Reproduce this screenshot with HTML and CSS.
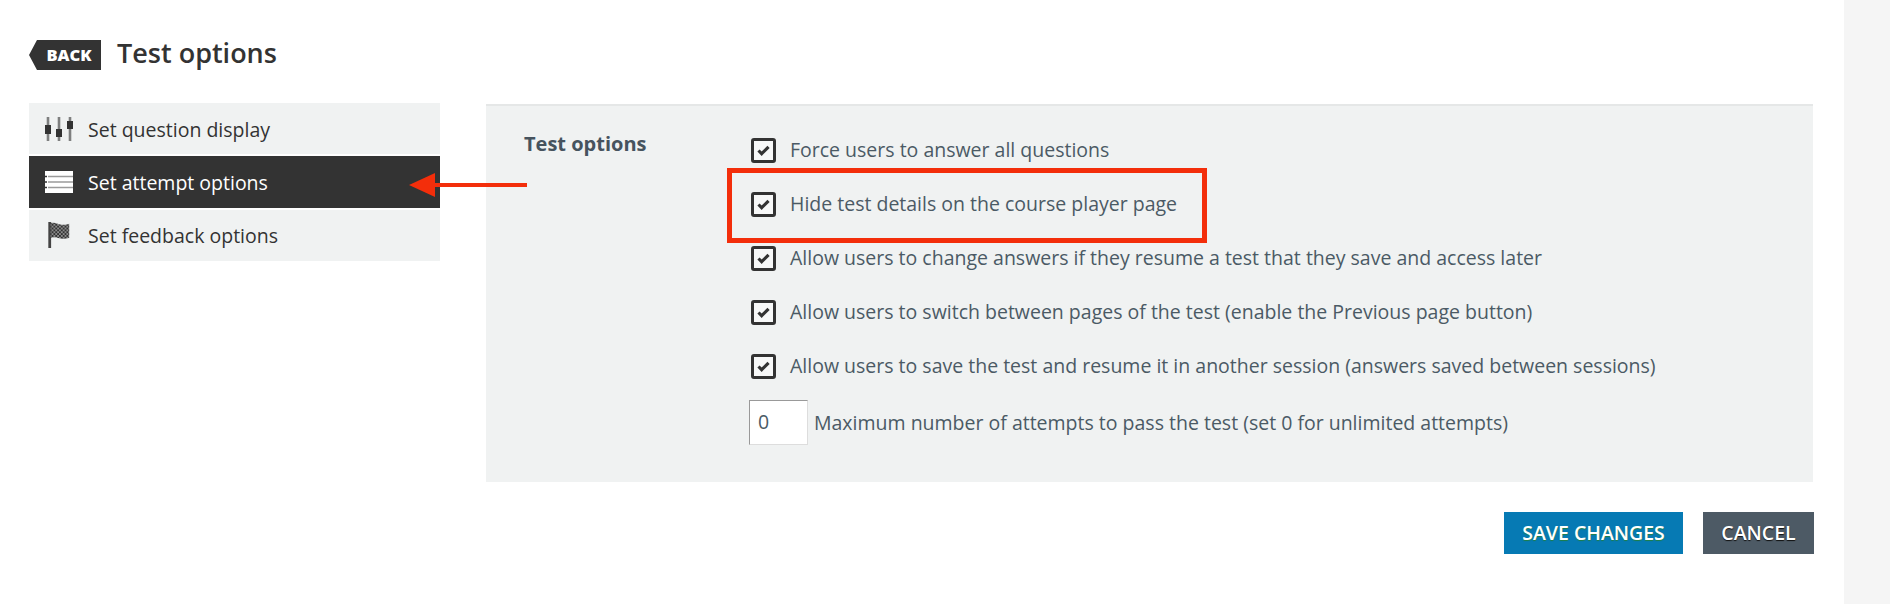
FILE: index.html
```html
<!DOCTYPE html>
<html lang="en">

<head>
    <meta charset="UTF-8">
    <meta name="viewport" content="width=device-width, initial-scale=1.0">
    <title>Test options</title>
    <link rel="stylesheet" href="styles.css">
</head>

<body>
    <div class="page">
        <main class="main">
            <header class="page-head">
                <a class="back" href="#">BACK</a>
                <h1>Test options</h1>
            </header>

            <div class="columns">
                <nav class="side-menu">
                    <a class="side-item" href="#">
                        <svg class="side-icon" viewBox="0 0 28 26">
                            <path d="M3 1v24M14 1v24M25 1v24" stroke="currentColor" stroke-width="2.6" opacity="0.6" />
                            <path d="M0 9h6v9H0zM11 13h6v8h-6zM22 5h6v8h-6z" fill="currentColor" />
                        </svg>
                        <span>Set question display</span>
                    </a>
                    <a class="side-item active" href="#">
                        <svg class="side-icon" viewBox="0 0 28 26">
                            <path d="M0 2h28v22H0z" fill="currentColor" />
                            <path d="M3 7.500h25M3 13h25M3 18.500h25" stroke="#9a9a9a" stroke-width="1.6" />
                            <path d="M0 7.500h2M0 13h2M0 18.500h2" stroke="#333" stroke-width="1.6" />
                        </svg>
                        <span>Set attempt options</span>
                    </a>
                    <a class="side-item" href="#">
                        <svg class="side-icon" viewBox="0 0 28 28">
                            <defs>
                                <pattern id="checker" width="4" height="4" patternUnits="userSpaceOnUse">
                                    <path d="M0 0h4v4H0z" fill="#8a8a8a" />
                                    <path d="M0 0h2v2H0zM2 2h2v2H2z" fill="#333" />
                                </pattern>
                            </defs>
                            <path d="M4 0v28" stroke="#444" stroke-width="3" />
                            <path d="M5 1c6-1 8 2 13 2 3 0 5 0 7-1v15c-2 1-4 1-7 1-5 0-7-3-13-1z" fill="url(#checker)" />
                        </svg>
                        <span>Set feedback options</span>
                    </a>
                </nav>

                <div class="content">
                    <section class="panel">
                        <h2 class="panel-title">Test options</h2>
                        <div class="options">
                            <label class="option"><span class="check"><svg viewBox="0 0 14 12"><path d="M1.500 6l3.500 3.500L12.500 2" /></svg></span>Force users to answer all questions</label>
                            <label class="option"><span class="check"><svg viewBox="0 0 14 12"><path d="M1.500 6l3.500 3.500L12.500 2" /></svg></span>Hide test details on the course player page</label>
                            <label class="option"><span class="check"><svg viewBox="0 0 14 12"><path d="M1.500 6l3.500 3.500L12.500 2" /></svg></span>Allow users to change answers if they resume a test that they save and access later</label>
                            <label class="option"><span class="check"><svg viewBox="0 0 14 12"><path d="M1.500 6l3.500 3.500L12.500 2" /></svg></span>Allow users to switch between pages of the test (enable the Previous page button)</label>
                            <label class="option"><span class="check"><svg viewBox="0 0 14 12"><path d="M1.500 6l3.500 3.500L12.500 2" /></svg></span>Allow users to save the test and resume it in another session (answers saved between sessions)</label>
                            <label class="attempts"><input class="attempts-input" type="text" value="0">Maximum number of attempts to pass the test (set 0 for unlimited attempts)</label>
                        </div>
                    </section>
                    <div class="actions">
                        <button class="btn btn-save">SAVE CHANGES</button>
                        <button class="btn btn-cancel">CANCEL</button>
                    </div>
                </div>
            </div>
        </main>
        <aside class="rail"></aside>
    </div>

    <!-- annotations drawn over the screenshot -->
    <div class="callout-box"></div>
    <svg class="callout-arrow" viewBox="0 0 118 26">
        <path d="M26 13h92" stroke="#f32e0b" stroke-width="4" />
        <path d="M0 13L26 1v24z" fill="#f32e0b" />
    </svg>
</body>

</html>
```

FILE: styles.css
```css
* {
    box-sizing: border-box;
}

html,
body {
    margin: 0;
    height: 100%;
    overflow: hidden;
}

body {
    font-family: "Open Sans", sans-serif;
    color: #333;
    background: #fff;
}

.page {
    display: flex;
    height: 604px;
}

.main {
    width: 1844px;
    padding: 40px 30px 0 29px;
}

.rail {
    flex: 1;
    background: #f5f5f5;
}

.page-head {
    display: flex;
    align-items: center;
    gap: 16px;
    height: 30px;
    margin-bottom: 33px;
}

.back {
    width: 72px;
    height: 30px;
    padding-left: 8px;
    background: #333;
    clip-path: polygon(8px 0, 100% 0, 100% 100%, 8px 100%, 0 50%);
    color: #fff;
    font-size: 16.5px;
    font-weight: 800;
    line-height: 30px;
    text-align: center;
    text-decoration: none;
}

h1 {
    margin: 0 0 6px;
    font-size: 27px;
    font-weight: 600;
    color: #333;
}

.columns {
    display: flex;
    gap: 46px;
}

.side-menu {
    display: flex;
    flex-direction: column;
    gap: 2px;
    width: 411px;
    height: 158px;
}

.side-item {
    display: flex;
    align-items: center;
    gap: 15px;
    height: 52px;
    padding-left: 16px;
    background: #f0f2f2;
    color: #333;
    font-size: 19.5px;
    text-decoration: none;
}

.side-item span {
    padding-top: 1px;
}

.side-item.active {
    background: #333;
    color: #fff;
}

.side-icon {
    flex: none;
    width: 28px;
    height: 26px;
}

.content {
    width: 1328px;
    margin-top: 1px;
}

.panel {
    display: flex;
    height: 378px;
    margin-right: 1px;
    padding: 32px 0 0 38px;
    background: #f0f2f2;
    border-top: 2px solid #e5e7e7;
}

.panel-title {
    width: 225px;
    margin: -7px 0 0;
    font-size: 20px;
    font-weight: 700;
    line-height: 26px;
    color: #46535e;
}

.options {
    display: flex;
    flex-direction: column;
    gap: 29px;
    font-size: 19.5px;
    color: #4b5a65;
}

.option {
    display: flex;
    align-items: flex-start;
    gap: 14px;
    height: 25px;
    margin-left: 2px;
    white-space: nowrap;
}

.option,
.attempts {
    line-height: 23px;
}

.check {
    display: flex;
    align-items: center;
    justify-content: center;
    flex: none;
    width: 25px;
    height: 25px;
    background: #f7f8f8;
    border: 3px solid #333;
    border-radius: 3px;
}

.check svg {
    width: 13px;
    height: 11px;
}

.check path {
    fill: none;
    stroke: #333;
    stroke-width: 3.4;
}

.attempts {
    display: flex;
    align-items: center;
    gap: 6px;
    margin-top: -8px;
    white-space: nowrap;
}

.attempts-input {
    width: 59px;
    height: 45px;
    padding: 0 8px 2px;
    background: #fff;
    border: 1px solid #ddd;
    border-top-color: #999;
    border-left-color: #999;
    font-family: inherit;
    font-size: 19.5px;
    color: #4b5a65;
}

.actions {
    display: flex;
    justify-content: flex-end;
    gap: 20px;
    margin-top: 30px;
}

.btn {
    height: 42px;
    border: 0;
    padding: 0 0 2px;
    font-family: inherit;
    font-size: 19.5px;
    font-weight: 600;
    color: #fff;
}

.btn-save {
    width: 179px;
    background: #067ab4;
    text-shadow: 0 1px 1px #1e7f45;
}

.btn-cancel {
    width: 111px;
    background: #4d5a65;
    text-shadow: 0 1px 1px #111;
}

.callout-box {
    position: absolute;
    left: 727px;
    top: 168px;
    width: 480px;
    height: 75px;
    border: 5px solid #f32e0b;
}

.callout-arrow {
    position: absolute;
    left: 409px;
    top: 172px;
    width: 118px;
    height: 26px;
}
```
